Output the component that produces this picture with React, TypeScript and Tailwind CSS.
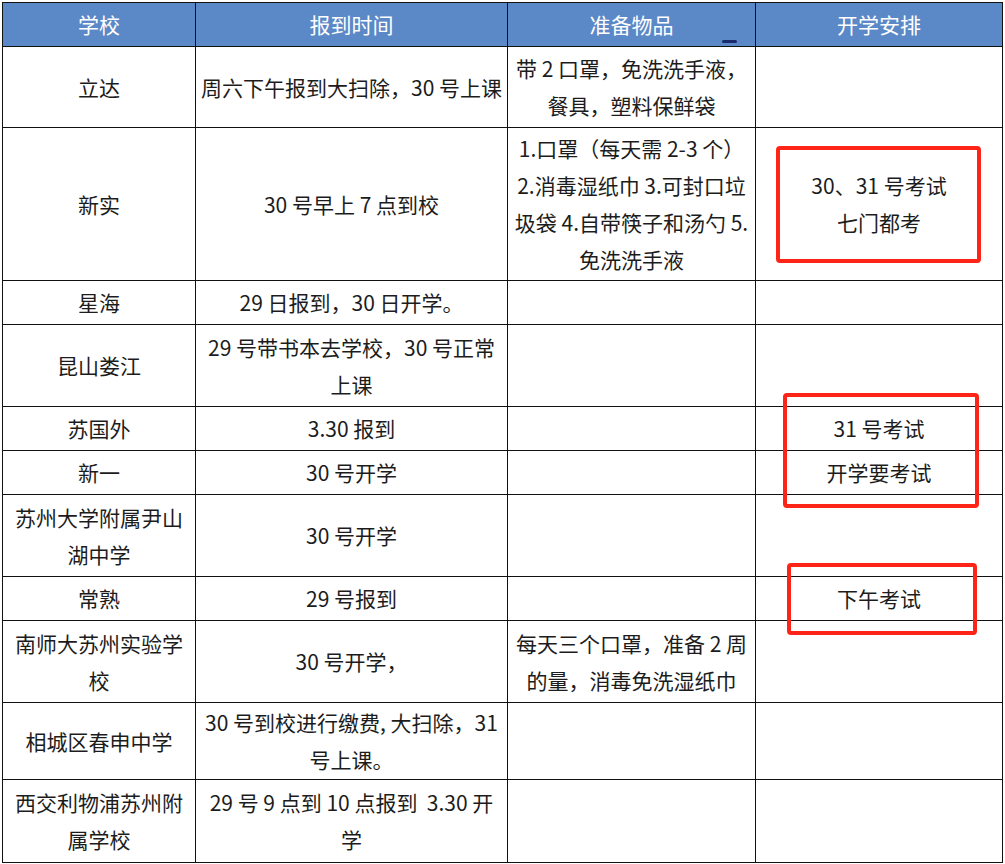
import React from "react"

type Row = {
  h: string
  school: string[]
  time: string[]
  items: string[]
  plan: string[]
}

const rows: Row[] = [
  { h: "h-[81px]", school: ["立达"], time: ["周六下午报到大扫除，30 号上课"], items: ["带 2 口罩，免洗洗手液，", "餐具，塑料保鲜袋"], plan: [] },
  {
    h: "h-[153px]",
    school: ["新实"],
    time: ["30 号早上 7 点到校"],
    items: ["1.口罩（每天需 2-3 个）", "2.消毒湿纸巾 3.可封口垃", "圾袋 4.自带筷子和汤勺 5.", "免洗洗手液"],
    plan: ["30、31 号考试", "七门都考"],
  },
  { h: "h-[44px]", school: ["星海"], time: ["29 日报到，30 日开学。"], items: [], plan: [] },
  { h: "h-[82px]", school: ["昆山娄江"], time: ["29 号带书本去学校，30 号正常", "上课"], items: [], plan: [] },
  { h: "h-[44px]", school: ["苏国外"], time: ["3.30 报到"], items: [], plan: ["31 号考试"] },
  { h: "h-[44px]", school: ["新一"], time: ["30 号开学"], items: [], plan: ["开学要考试"] },
  { h: "h-[82px]", school: ["苏州大学附属尹山", "湖中学"], time: ["30 号开学"], items: [], plan: [] },
  { h: "h-[44px]", school: ["常熟"], time: ["29 号报到"], items: [], plan: ["下午考试"] },
  { h: "h-[82px]", school: ["南师大苏州实验学", "校"], time: ["30 号开学，"], items: ["每天三个口罩，准备 2 周", "的量，消毒免洗湿纸巾"], plan: [] },
  { h: "h-[77px]", school: ["相城区春申中学"], time: ["30 号到校进行缴费, 大扫除，31", "号上课。"], items: [], plan: [] },
  { h: "h-[83px]", school: ["西交利物浦苏州附", "属学校"], time: ["29 号 9 点到 10 点报到  3.30 开", "学"], items: [], plan: [] },
]

function Cell({ lines, h }: { lines: string[]; h: string }) {
  return (
    <div className={`${h} border-r border-b border-[#111] flex flex-col items-center justify-center text-center overflow-hidden`}>
      {lines.map((l, i) => (
        <div key={i} className="whitespace-pre leading-[37px]">{l}</div>
      ))}
    </div>
  )
}

export default function App() {
  const headers = ["学校", "报到时间", "准备物品", "开学安排"]
  return (
    <div className="w-[1005px] h-[864px] bg-white pt-[2px] pl-[2px] relative text-[21px] text-[#1c1c1c]" style={{ fontFamily: '"Noto Sans CJK SC", "Noto Sans", sans-serif' }}>
      <div className="grid grid-cols-[193px_312px_248px_247px] border-l border-t border-[#111] w-[1001px]">
        {headers.map((t, i) => (
          <div key={t} className="relative h-[44px] bg-[#5b88c6] text-white border-r border-b border-[#111] flex items-center justify-center">
            {t}
            {i === 2 && <span className="absolute left-[214px] bottom-[3px] w-[15px] h-[3px] bg-[#1b2a6b] rounded-full" />}
          </div>
        ))}
        {rows.map((r, i) => (
          <React.Fragment key={i}>
            <Cell lines={r.school} h={r.h} />
            <Cell lines={r.time} h={r.h} />
            <Cell lines={r.items} h={r.h} />
            <Cell lines={r.plan} h={r.h} />
          </React.Fragment>
        ))}
      </div>

      {/* red highlight boxes */}
      <div className="absolute left-[776px] top-[146px] w-[205px] h-[117px] border-4 border-[#ff2418] rounded-[4px]" />
      <div className="absolute left-[783px] top-[393px] w-[196px] h-[115px] border-4 border-[#ff2418] rounded-[4px]" />
      <div className="absolute left-[787px] top-[563px] w-[190px] h-[72px] border-4 border-[#ff2418] rounded-[4px]" />
    </div>
  )
}
